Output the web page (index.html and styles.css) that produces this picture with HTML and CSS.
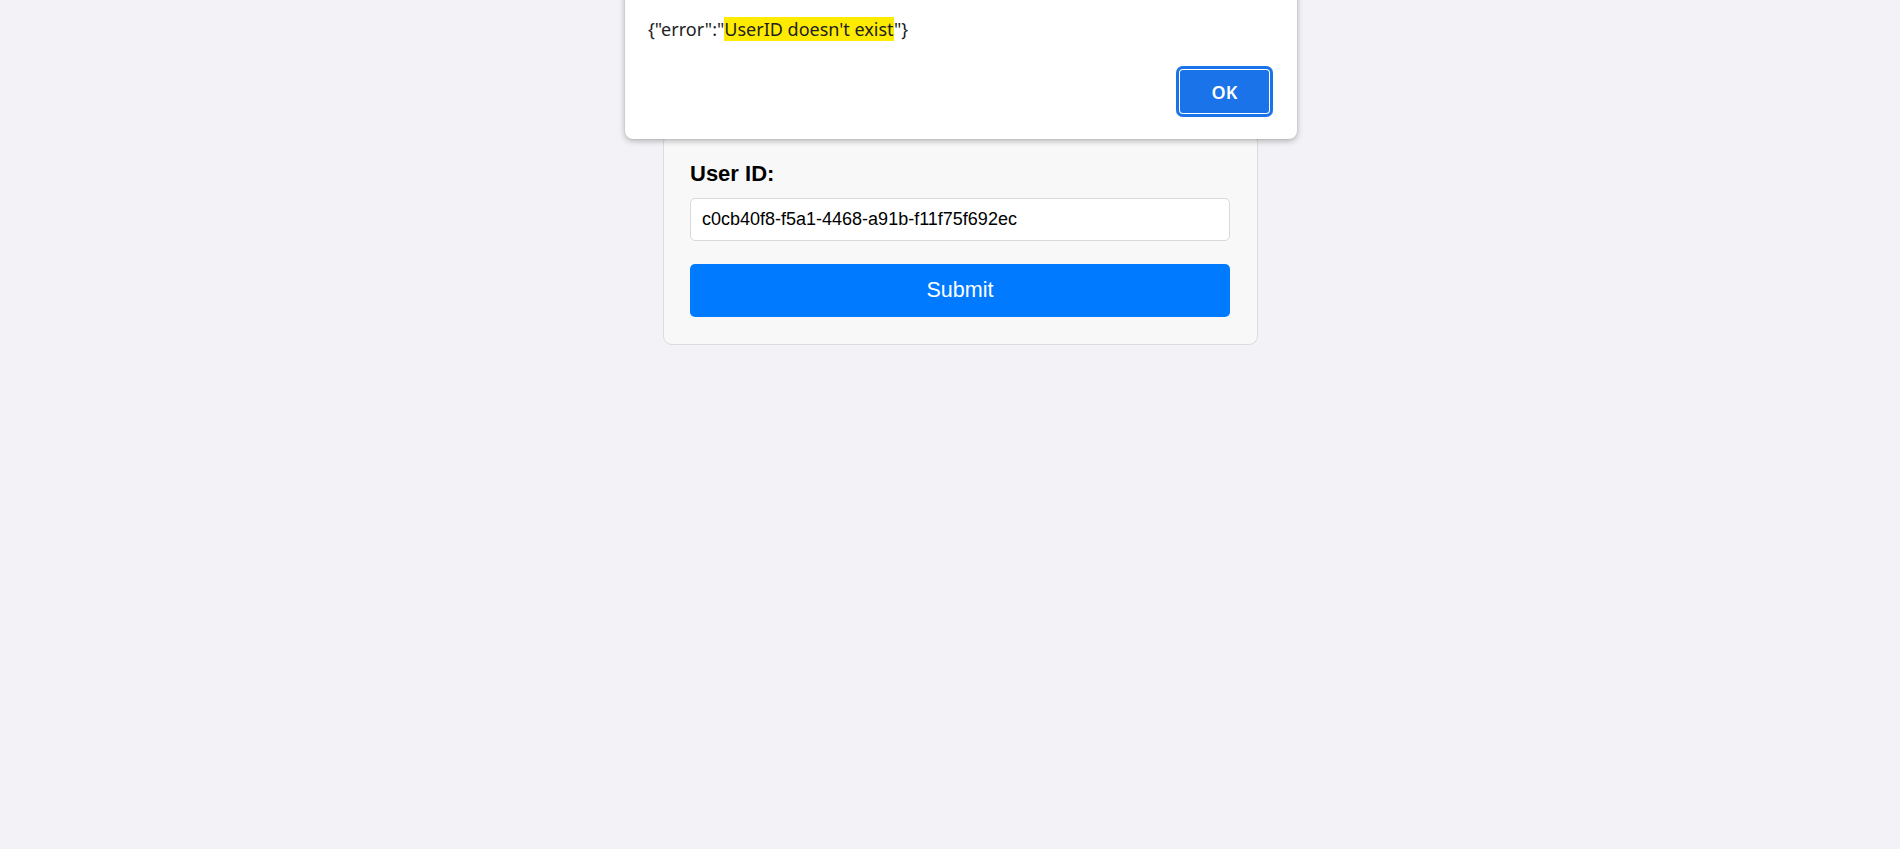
FILE: index.html
```html
<!DOCTYPE html>
<html>
<head>
<meta charset="utf-8">
<link rel="stylesheet" href="styles.css">
</head>
<body>
<main class="page">
  <form class="card">
    <label class="label" for="uid">User ID:</label>
    <input class="input" id="uid" type="text" value="c0cb40f8-f5a1-4468-a91b-f11f75f692ec">
    <button class="submit" type="button">Submit</button>
  </form>
</main>
<div class="dialog" role="alertdialog">
  <p class="message">{"error":"<mark class="hl">UserID doesn't exist</mark>"}</p>
  <div class="actions">
    <button class="ok" type="button">OK</button>
  </div>
</div>
</body>
</html>
```
FILE: styles.css
```css
html, body {
  margin: 0;
  padding: 0;
  height: 100%;
}
body {
  background: #f3f3f7;
  font-family: "Liberation Sans", Arial, sans-serif;
  overflow: hidden;
}
.page {
  display: flex;
  justify-content: center;
  padding: 133px 0 0 21px;
}
.card {
  width: 595px;
  box-sizing: border-box;
  background: #f8f8f9;
  border: 1px solid #dcdcdf;
  border-radius: 9px;
  padding: 27px 27px 27px 26px;
  display: flex;
  flex-direction: column;
}
.label {
  font-weight: bold;
  font-size: 22px;
  line-height: 25px;
  color: #000;
}
.input {
  margin-top: 12px;
  height: 43px;
  box-sizing: border-box;
  border: 1px solid #d9d9dc;
  border-radius: 5px;
  background: #fff;
  padding: 0 11px;
  font-family: "Liberation Sans", Arial, sans-serif;
  font-size: 18px;
  color: #000;
  outline: none;
}
.submit {
  margin-top: 23px;
  height: 53px;
  border: none;
  border-radius: 5px;
  background: #007bff;
  color: #fff;
  font-family: "Liberation Sans", Arial, sans-serif;
  font-size: 21.5px;
  padding: 0;
}
.dialog {
  position: absolute;
  left: 625px;
  top: -20px;
  width: 672px;
  box-sizing: border-box;
  background: #fff;
  border-radius: 0 0 8px 8px;
  box-shadow: 0 2px 6px rgba(0, 0, 0, 0.28), 0 0 2px rgba(0, 0, 0, 0.12);
  padding: 37px 24px 22px 23px;
  font-family: "Noto Sans", "Open Sans", sans-serif;
}
.message {
  margin: 0;
  font-size: 18px;
  line-height: 24px;
  color: #202124;
}
.hl {
  background: #ffeb00;
  color: #202124;
}
.actions {
  display: flex;
  justify-content: flex-end;
  margin-top: 25px;
}
.ok {
  width: 97px;
  height: 51px;
  border: none;
  border-radius: 7px;
  background: #1a73e8;
  box-shadow: inset 0 0 0 3px #1a73e8, inset 0 0 0 4px #ffffff;
  color: #fff;
  font-family: "Noto Sans", "Open Sans", sans-serif;
  font-weight: 600;
  font-size: 18px;
  padding: 0;
}
```
